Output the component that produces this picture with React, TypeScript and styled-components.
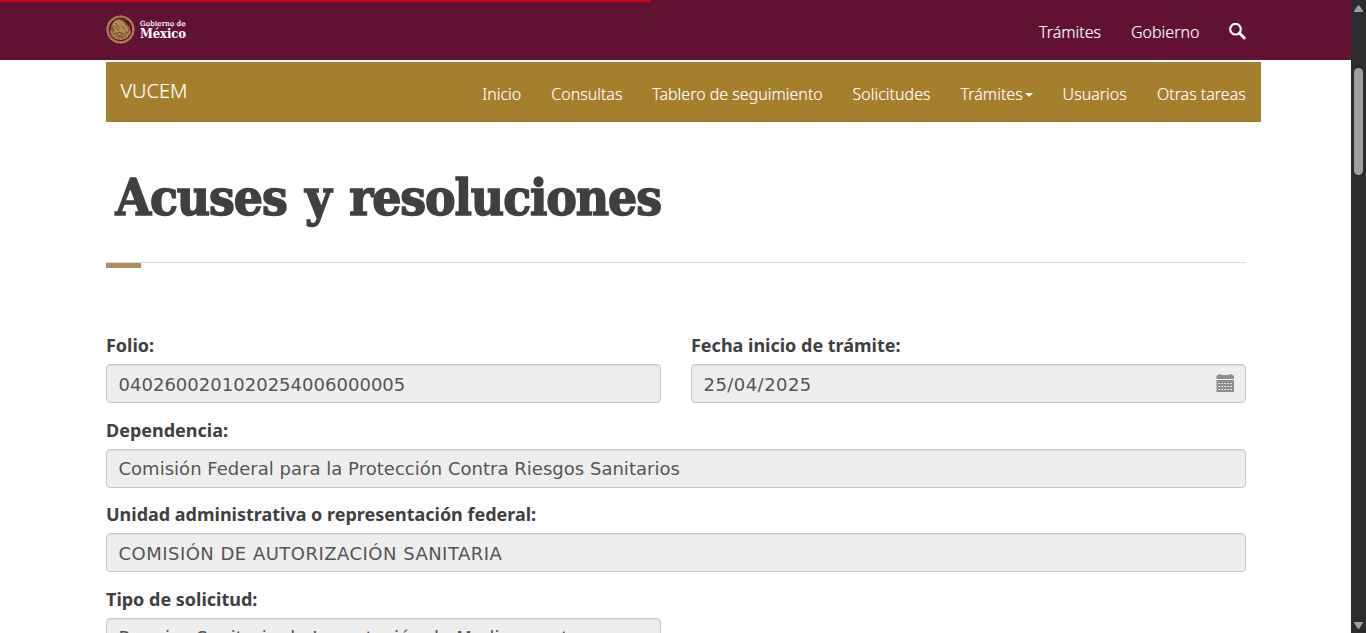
import React from "react";
import styled, { createGlobalStyle } from "styled-components";

const GlobalStyle = createGlobalStyle`
  * { box-sizing: border-box; }
  html, body { margin: 0; padding: 0; overflow: hidden; background: #fff; }
  body { font-family: "Noto Sans", sans-serif; font-size: 18px; color: #404041; }
`;

const Frame = styled.div`
  display: flex;
  width: 100%;
  height: 633px;
  overflow: hidden;
`;

const Page = styled.div`
  position: relative;
  flex: 1;
  min-width: 0;
  height: 633px;
  overflow: hidden;
`;

const Progress = styled.div`
  position: absolute;
  top: 0;
  left: 0;
  width: 651px;
  height: 2px;
  background: #d0021b;
`;

const TopBar = styled.header`
  display: flex;
  justify-content: space-between;
  height: 60px;
  padding: 0 105px 0 106px;
  background: #611232;
  color: #fff;
`;

const Brand = styled.a`
  display: flex;
  align-items: flex-start;
  padding-top: 15px;
  gap: 5px;
`;

const BrandText = styled.span`
  display: flex;
  flex-direction: column;
  padding-top: 5px;
  color: #fff;
`;

const BrandSmall = styled.span`
  font-family: "DejaVu Serif", serif;
  font-size: 7px;
  line-height: 8px;
  letter-spacing: 0.2px;
  -webkit-text-stroke: 0.2px #fff;
  white-space: nowrap;
`;

const BrandLarge = styled.span`
  font-family: "DejaVu Serif", serif;
  font-stretch: condensed;
  font-size: 13px;
  line-height: 12px;
  font-weight: 700;
  letter-spacing: -0.15px;
`;

const Menu = styled.nav`
  display: flex;
  gap: 30px;
  padding-top: 20px;
`;

const MenuItem = styled.a<{ $w: number }>`
  display: flex;
  width: ${(p) => p.$w}px;
  font-size: 16px;
  line-height: 24px;
  font-weight: 300;
  white-space: nowrap;
  color: #fff;
  -webkit-text-stroke: 0.15px #fff;
`;

const SearchLink = styled.a`
  display: block;
  width: 17px;
  height: 17px;
  margin-top: 3px;
  line-height: 0;
`;

const Caret = styled.span`
  width: 0;
  height: 0;
  margin: 11px 0 0 2px;
  border-top: 4px solid #fff;
  border-left: 4px solid transparent;
  border-right: 4px solid transparent;
`;

const SubBar = styled.div`
  display: flex;
  justify-content: space-between;
  width: 1155px;
  height: 60px;
  margin: 2px 0 0 106px;
  padding: 0 14.3px 0 14.4px;
  background: #a57f2c;
  color: #fff;
`;

const SubBrand = styled.a`
  padding-top: 14px;
  font-size: 20px;
  line-height: 30px;
  font-weight: 300;
  -webkit-text-stroke: 0.15px #fff;
`;

const Content = styled.main`
  width: 1140px;
  margin-left: 106px;
`;

const Title = styled.h1`
  height: 141px;
  margin: 0;
  padding: 40px 0 0 9.5px;
  border-bottom: 1px solid #ddd;
  font-family: "DejaVu Serif", serif;
  font-stretch: condensed;
  font-size: 51px;
  line-height: 70px;
  font-weight: 700;
  letter-spacing: -1.1px;
  word-spacing: 3.6px;
  white-space: nowrap;
  color: #404041;
  -webkit-text-stroke: 1.5px #404041;
  stroke-linejoin: round;
`;

const TitleAccent = styled.div`
  height: 5px;
  width: 35px;
  background: #b38e5d;
`;

const Form = styled.form`
  display: flex;
  flex-direction: column;
  gap: 15.6px;
  padding-top: 66.25px;
`;

const Row = styled.div`
  display: grid;
  grid-template-columns: 1fr 1fr;
  gap: 30px;
`;

const Field = styled.div`
  display: flex;
  flex-direction: column;
`;

const Label = styled.label`
  height: 25px;
  margin-bottom: 5px;
  font-size: 18px;
  line-height: 23px;
  font-weight: 700;
  letter-spacing: -0.01px;
  white-space: nowrap;
`;

const Control = styled.div`
  display: flex;
  align-items: center;
  justify-content: space-between;
  height: 39px;
  padding: 0 11px 0 11.5px;
  border: 1px solid #c8c8c8;
  border-radius: 4px;
  background: #eee;
  box-shadow: inset 0 1px 1px rgba(0, 0, 0, 0.075);
  font-family: "DejaVu Sans", sans-serif;
  font-size: 18px;
  color: #555;
  white-space: nowrap;
`;

const Value = styled.span<{ $spacing?: number }>`
  padding-top: 0.6px;
  letter-spacing: ${(p) => p.$spacing ?? 0}px;
`;

const Scrollbar = styled.aside`
  display: flex;
  flex-direction: column;
  align-items: center;
  justify-content: space-between;
  width: 15px;
  height: 633px;
  padding: 5px 0 4px;
  background: #2c2c2c;
`;

const Thumb = styled.div`
  width: 9px;
  height: 107px;
  margin: 56px 0 auto;
  border-radius: 5px;
  background: #9f9f9f;
`;

const Seal = () => (
  <svg width="29" height="29" viewBox="0 0 29 29" fill="none" stroke="#b28c55">
    <circle cx="14.5" cy="14.5" r="12.9" strokeWidth="2.400" stroke="#94683f" />
    <circle cx="14.5" cy="14.5" r="12.9" strokeWidth="2" strokeDasharray="1.400 1" />
    <circle cx="14.5" cy="14.5" r="10" fill="#8a5a40" stroke="none" />
    <path d="M5 16c1 5 4.500 7.800 9.500 7.800S23 21 24 16" strokeWidth="2.200" strokeDasharray="2 .5" />
    <path d="M9 6c3-2 6-1.500 7 .8l3 .8-2 1.500c3 1 5.300 3.700 4.700 7.400l-3-1.500.5 3.500-3.500-1.500-2 3-1.500-3-5 .5 2.500-2.500C6 12.500 6.500 8 9 6Z" fill="#b08a50" strokeWidth=".6" />
    <path d="m9.500 8 4 4.500M8 11l5.500 4.500m2-5 3.500 4m-7 2.500 4 1.500" stroke="#6c2336" strokeWidth=".7" />
    <path d="M6.500 20c3 1 4.500-1 7.500-.5s4.500 1.500 8-.5" strokeWidth="1" />
    <path d="M18 5.500q4 2 5 6" stroke="#611232" strokeWidth="1.500" />
  </svg>
);

const SearchIcon = () => (
  <svg width="17" height="17" viewBox="0 0 17 17" fill="none" stroke="#fff">
    <circle cx="6.5" cy="6.200" r="5.300" strokeWidth="2.100" />
    <path d="m10.500 10.300 4.700 4.600" strokeWidth="2.900" strokeLinecap="round" />
  </svg>
);

const holes = [0, 1, 2, 3, 4];

const CalendarIcon = () => (
  <svg width="18" height="19" viewBox="0 0 18 19" fill="#8e8e8e">
    <path d="M.5 5V2.500Q.5 1 2 1h.5Q2.500 0 4 0t1.500 1h7.500q0-1 1.500-1T16 1h.5Q18 1 18 2.500V5Z" />
    <path d="M.5 6H18v12H.5Z" />
    {[9, 12, 15].map((y) =>
      holes.map((i) => (
        <rect key={`${y}-${i}`} x={2.5 + i * 3} y={y} width="1.500" height="1" fill="#fff" />
      ))
    )}
  </svg>
);

const Arrow = ({ down = false }: { down?: boolean }) => (
  <svg width="9" height="7" viewBox="0 0 9 7" fill="#9f9f9f">
    <path d={down ? "M0 0h9v1L5.500 6.300q-1 1-2 0L0 1Z" : "M0 7h9V6L5.500.7q-1-1-2 0L0 6Z"} />
  </svg>
);

export default function App() {
  return (
    <>
      <GlobalStyle />
      <Frame>
        <Page>
          <TopBar>
            <Brand>
              <Seal />
              <BrandText>
                <BrandSmall>Gobierno de</BrandSmall>
                <BrandLarge>México</BrandLarge>
              </BrandText>
            </Brand>
            <Menu>
              <MenuItem $w={62}>Trámites</MenuItem>
              <MenuItem $w={68}>Gobierno</MenuItem>
              <SearchLink>
                <SearchIcon />
              </SearchLink>
            </Menu>
          </TopBar>
          <SubBar>
            <SubBrand>VUCEM</SubBrand>
            <Menu>
              <MenuItem $w={39}>Inicio</MenuItem>
              <MenuItem $w={71}>Consultas</MenuItem>
              <MenuItem $w={170.4}>Tablero de seguimiento</MenuItem>
              <MenuItem $w={78}>Solicitudes</MenuItem>
              <MenuItem $w={72}>
                Trámites
                <Caret />
              </MenuItem>
              <MenuItem $w={64.3}>Usuarios</MenuItem>
              <MenuItem $w={89.8}>Otras tareas</MenuItem>
            </Menu>
          </SubBar>
          <Content>
            <Title>Acuses y resoluciones</Title>
            <TitleAccent />
            <Form>
              <Row>
                <Field>
                  <Label>Folio:</Label>
                  <Control>
                    <Value $spacing={0.02}>0402600201020254006000005</Value>
                  </Control>
                </Field>
                <Field>
                  <Label>Fecha inicio de trámite:</Label>
                  <Control>
                    <Value $spacing={0.45}>25/04/2025</Value>
                    <CalendarIcon />
                  </Control>
                </Field>
              </Row>
              <Field>
                <Label>Dependencia:</Label>
                <Control>
                  <Value $spacing={0.02}>Comisión Federal para la Protección Contra Riesgos Sanitarios</Value>
                </Control>
              </Field>
              <Field>
                <Label>Unidad administrativa o representación federal:</Label>
                <Control>
                  <Value $spacing={0.48}>COMISIÓN DE AUTORIZACIÓN SANITARIA</Value>
                </Control>
              </Field>
              <Row>
                <Field>
                  <Label>Tipo de solicitud:</Label>
                  <Control>
                    <Value $spacing={0.12}>Permiso Sanitario de Importación de Medicamentos</Value>
                  </Control>
                </Field>
              </Row>
            </Form>
          </Content>
          <Progress />
        </Page>
        <Scrollbar>
          <Arrow />
          <Thumb />
          <Arrow down />
        </Scrollbar>
      </Frame>
    </>
  );
}
